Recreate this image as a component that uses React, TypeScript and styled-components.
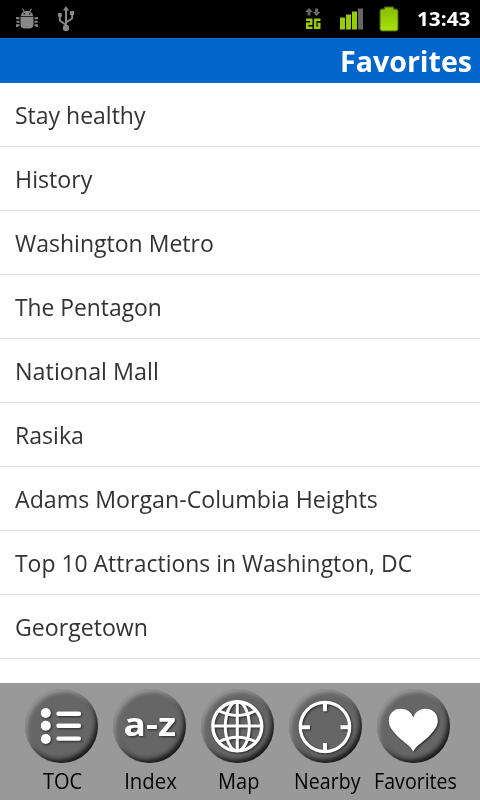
import React from 'react';
import styled, { createGlobalStyle } from 'styled-components';

const GlobalStyle = createGlobalStyle`
  * { box-sizing: border-box; }
  body { margin: 0; background: #fff; }
`;

const Screen = styled.div`
  width: 480px;
  height: 800px;
  display: flex;
  flex-direction: column;
  overflow: hidden;
  background: #fff;
  font-family: 'Open Sans', 'Noto Sans', sans-serif;
`;

const StatusBar = styled.header`
  flex: none;
  height: 38px;
  display: flex;
  align-items: center;
  justify-content: space-between;
  padding: 0 10px 0 15px;
  background: #000;
`;

const StatusGroup = styled.div<{ $gap: number }>`
  display: flex;
  align-items: center;
  gap: ${(p) => p.$gap}px;
  svg { display: block; }
`;

/* Condenses or widens text horizontally without changing its height. */
const Fitted = styled.span<{ $scale: number; $origin: string }>`
  display: inline-block;
  white-space: nowrap;
  transform: scaleX(${(p) => p.$scale});
  transform-origin: ${(p) => p.$origin} center;
`;

const Clock = styled.div`
  width: 56px;
  text-align: right;
  font-size: 20px;
  font-weight: 700;
  line-height: 38px;
  color: #fff;
`;

const TitleBar = styled.div`
  flex: none;
  height: 45px;
  padding-right: 7.5px;
  text-align: right;
  background: #0066cc;
  color: #fff;
  font-size: 29px;
  font-weight: 700;
  line-height: 45px;
`;

const List = styled.ul`
  flex: 1;
  margin: 0;
  padding: 0;
  list-style: none;
`;

const Row = styled.li`
  height: 64px;
  padding-left: 15px;
  border-bottom: 1px solid #dfdfdf;
  color: #333;
  font-size: 24px;
  line-height: 64px;
`;

const TabBar = styled.nav`
  flex: none;
  height: 117px;
  display: grid;
  grid-template-columns: repeat(5, 88.2px);
  padding: 6px 0 0 17px;
  background: #999;
`;

const Tab = styled.div`
  display: flex;
  flex-direction: column;
  align-items: center;
`;

const Disc = styled.div`
  flex: none;
  width: 73px;
  height: 74px;
  border-radius: 50%;
  background: #666;
  box-shadow:
    inset 3px 4px 4px -1px rgba(180, 180, 180, 0.62),
    inset -3px -4px 5px -1px rgba(0, 0, 0, 0.8);
  svg {
    display: block;
    filter: drop-shadow(1px 1.5px 1px rgba(0, 0, 0, 0.6));
  }
`;

const TabLabel = styled.div`
  font-size: 22px;
  line-height: 30px;
  margin-top: 2px;
  padding-left: 2.5px;
  color: #000;
  white-space: nowrap;
`;

const BugIcon = () => (
  <svg width="24" height="22" viewBox="0 0 24 22" fill="#888">
    <path d="M6 8C6.200 4.600 8.800 3 12 3S17.800 4.600 18 8Z" />
    <path d="M7.500 0.800L9.500 4M16.500 0.800L14.500 4" stroke="#888" strokeWidth="1.200" />
    <path d="M5.500 8.800H18.500V16Q18.500 20.500 14 20.500H10Q5.500 20.500 5.500 16Z" />
    <path d="M4.500 10.300H2V9M4.500 13.800H1.500M4.500 17.300H2V19M19.500 10.300H22V9M19.500 13.800H22.500M19.500 17.300H22V19" fill="none" stroke="#888" strokeWidth="1.900" />
    <circle cx="9.300" cy="5.800" r="0.800" fill="#000" />
    <circle cx="14.700" cy="5.800" r="0.800" fill="#000" />
  </svg>
);

const UsbIcon = () => (
  <svg width="18" height="26" viewBox="0 0 18 26" fill="none" stroke="#888" strokeWidth="2">
    <path d="M9 22V3M9 19L3.500 15Q2.800 14.500 2.800 13V9.500M9 16.500L14.500 13Q15.200 12.500 15.200 11V7" />
    <path d="M9 0L12 4.500H6Z" fill="#888" stroke="none" />
    <circle cx="9" cy="22" r="3.200" fill="#888" stroke="none" />
    <circle cx="2.900" cy="9" r="2.200" fill="#888" stroke="none" />
    <rect x="13" y="5" width="4" height="4" fill="#888" stroke="none" />
  </svg>
);

const DataIcon = () => (
  <svg width="24" height="26" viewBox="0 0 24 26">
    <path d="M8 2L12 6H9.500V9.500H6.500V6H4ZM15.500 10L19.500 6H17V2.500H14V6H11.500Z" fill="#666" />
    <g fill="none" stroke="#99cc00" strokeWidth="2.400">
      <path d="M5 13.700H10.300V17.800H6.200V21.800H11.500" />
      <path d="M19.500 13.700H14.200V21.800H18.300V18H16.500" />
    </g>
  </svg>
);

const SignalIcon = () => (
  <svg width="25" height="24" viewBox="0 0 25 24">
    <g fill="#99cc00">
      <rect x="1" y="10.500" width="5" height="12" />
      <rect x="7" y="7.500" width="5" height="15" />
      <rect x="13" y="4.500" width="5" height="18" />
    </g>
    <rect x="19" y="1.500" width="5" height="21" fill="#666" />
  </svg>
);

const BatteryIcon = () => (
  <svg width="22" height="28" viewBox="0 0 22 28">
    <defs>
      <linearGradient id="charge" x2="0" y2="1">
        <stop offset="0" stopColor="#86bd00" />
        <stop offset="1" stopColor="#a9df0c" />
      </linearGradient>
    </defs>
    <path d="M6.500 2H15.500V4H18Q20 4 20 6V24Q20 26 18 26H4Q2 26 2 24V6Q2 4 4 4H6.500Z" fill="url(#charge)" stroke="#456800" strokeWidth="1" />
  </svg>
);

const TocGlyph = () => (
  <svg width="73" height="74" viewBox="0 0 73 74" fill="#fff">
    <circle cx="20.800" cy="24" r="5" />
    <circle cx="20.800" cy="36.700" r="5" />
    <circle cx="20.800" cy="50" r="5" />
    <path d="M33.500 24.700H54M33.500 36.800H54M33.500 49.600H54" stroke="#fff" strokeWidth="4.400" strokeLinecap="round" />
  </svg>
);

const IndexGlyph = () => (
  <svg width="73" height="74" viewBox="0 0 73 74">
    <text x="10.500" y="46.800" fontSize="33" fontWeight="700" fill="#fff" textLength="52.500" lengthAdjust="spacingAndGlyphs">
      a-z
    </text>
  </svg>
);

const MapGlyph = () => (
  <svg width="73" height="74" viewBox="0 0 73 74" fill="none" stroke="#fff" strokeWidth="3.400">
    <circle cx="36.300" cy="37.300" r="24.500" />
    <ellipse cx="36.300" cy="37.300" rx="12" ry="24.500" strokeWidth="3" />
    <path d="M36.300 12.500V61.500M12 37H61" strokeWidth="3" />
    <path d="M17.500 21.500Q36.300 31.500 55.200 21.500M17.500 53Q36.300 43.500 55.200 53" strokeWidth="3" />
  </svg>
);

const NearbyGlyph = () => (
  <svg width="73" height="74" viewBox="0 0 73 74" fill="none" stroke="#fff" strokeWidth="3.200">
    <circle cx="36" cy="38" r="24.700" />
    <path d="M36 12V22.300M36 54V64M10 38.300H21M51.500 38.300H62" strokeWidth="4" />
  </svg>
);

const HeartGlyph = () => (
  <svg width="73" height="74" viewBox="0 0 73 74" fill="#fff">
    <path d="M36.300 62.500C33 56 25 52.500 18.500 45C13.500 39.500 11.800 36 11.800 31.500C11.800 24.500 17 19.700 23.500 19.700C29.500 19.700 34.500 23 36.300 28.500C38 23 43 19.700 49 19.700C55.500 19.700 60.800 24.500 60.800 31.500C60.800 36 59 39.500 54 45C47.500 52.500 39.500 56 36.300 62.500Z" />
  </svg>
);

const articles = [
  { title: 'Stay healthy', scale: 0.958 },
  { title: 'History', scale: 0.968 },
  { title: 'Washington Metro', scale: 0.959 },
  { title: 'The Pentagon', scale: 0.951 },
  { title: 'National Mall', scale: 0.973 },
  { title: 'Rasika', scale: 0.963 },
  { title: 'Adams Morgan-Columbia Heights', scale: 0.966 },
  { title: 'Top 10 Attractions in Washington, DC', scale: 0.955 },
  { title: 'Georgetown', scale: 0.963 },
];

const tabs = [
  { label: 'TOC', scale: 0.91, Glyph: TocGlyph },
  { label: 'Index', scale: 0.925, Glyph: IndexGlyph },
  { label: 'Map', scale: 0.91, Glyph: MapGlyph },
  { label: 'Nearby', scale: 0.89, Glyph: NearbyGlyph },
  { label: 'Favorites', scale: 0.89, Glyph: HeartGlyph },
];

export default function App() {
  return (
    <Screen>
      <GlobalStyle />
      <StatusBar>
        <StatusGroup $gap={18}>
          <BugIcon />
          <UsbIcon />
        </StatusGroup>
        <StatusGroup $gap={14}>
          <DataIcon />
          <SignalIcon />
          <BatteryIcon />
          <Clock>
            <Fitted $scale={1.04} $origin="right">13:43</Fitted>
          </Clock>
        </StatusGroup>
      </StatusBar>
      <TitleBar>
        <Fitted $scale={0.985} $origin="right">Favorites</Fitted>
      </TitleBar>
      <List>
        {articles.map(({ title, scale }) => (
          <Row key={title}>
            <Fitted $scale={scale} $origin="left">{title}</Fitted>
          </Row>
        ))}
      </List>
      <TabBar>
        {tabs.map(({ label, scale, Glyph }) => (
          <Tab key={label}>
            <Disc>
              <Glyph />
            </Disc>
            <TabLabel>
              <Fitted $scale={scale} $origin="center">{label}</Fitted>
            </TabLabel>
          </Tab>
        ))}
      </TabBar>
    </Screen>
  );
}
